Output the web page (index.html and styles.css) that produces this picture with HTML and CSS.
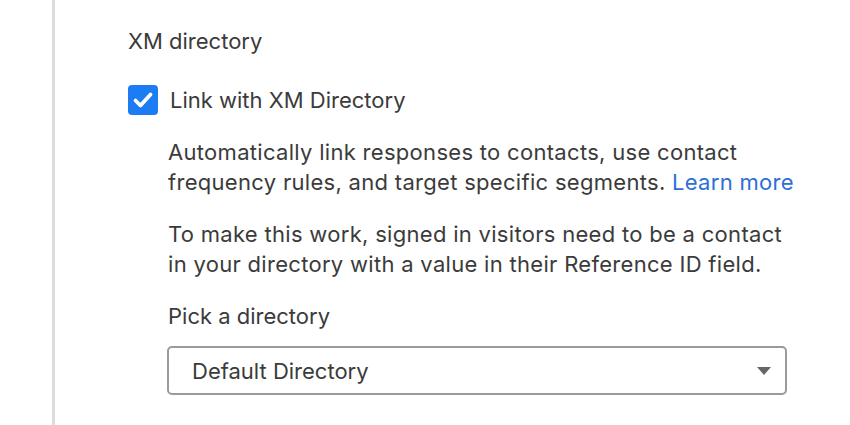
FILE: index.html
```html
<!DOCTYPE html>
<html lang="en">
<head>
<meta charset="utf-8">
<title>XM directory</title>
<link rel="stylesheet" href="styles.css">
</head>
<body>
<div class="page">
  <div class="rail"></div>
  <section class="content">
    <h2 class="heading">XM directory</h2>
    <label class="check-row">
      <span class="checkbox">
        <svg viewBox="0 0 30 30" width="30" height="30" aria-hidden="true">
          <path d="M7.5 15.5 L12.5 20.5 L22.5 9.5" fill="none" stroke="#fff" stroke-width="3.8" stroke-linecap="round" stroke-linejoin="round"/>
        </svg>
      </span>
      <span class="check-label">Link with XM Directory</span>
    </label>
    <div class="details">
      <p class="desc">Automatically link responses to contacts, use contact frequency rules, and target specific segments. <a class="link" href="#">Learn more</a></p>
      <p class="desc">To make this work, signed in visitors need to be a contact in your directory with a value in their Reference ID field.</p>
      <p class="field-label">Pick a directory</p>
      <div class="select">
        <span class="select-value">Default Directory</span>
        <span class="caret"></span>
      </div>
    </div>
  </section>
</div>
</body>
</html>
```
FILE: styles.css
```css
* { box-sizing: border-box; }
html, body {
  margin: 0;
  padding: 0;
  background: #fff;
}
body {
  font-family: Inter, "Noto Sans", "Liberation Sans", sans-serif;
  font-size: 22px;
  line-height: 30px;
  color: #3b3b3b;
}
.page {
  display: flex;
  height: 425px;
}
.rail {
  width: 3px;
  margin-left: 52px;
  background: #dcdcdc;
  flex: none;
}
.content {
  padding-left: 73px;
  padding-top: 26px;
  flex: 1;
}
.heading {
  margin: 0;
  font-size: 22px;
  font-weight: 400;
  line-height: 30px;
}
.check-row {
  display: flex;
  align-items: center;
  gap: 12px;
  margin-top: 29px;
  height: 30px;
}
.checkbox {
  width: 30px;
  height: 30px;
  border-radius: 4px;
  background: #1b7cf3;
  display: flex;
}
.details {
  padding-left: 40px;
  width: 700px;
}
.desc {
  margin: 22px 0 0;
  width: 632px;
  letter-spacing: 0.3px;
}
.link {
  color: #2d6fd6;
  text-decoration: none;
}
.field-label {
  margin: 22px 0 0;
}
.select {
  margin-top: 15px;
  margin-left: -1px;
  width: 620px;
  height: 49px;
  border: 2px solid #9a9a9a;
  border-radius: 5px;
  display: flex;
  align-items: center;
  justify-content: space-between;
  padding: 0 14px 0 23px;
}
.caret {
  width: 0;
  height: 0;
  border-left: 7px solid transparent;
  border-right: 7px solid transparent;
  border-top: 8px solid #666;
}
```
